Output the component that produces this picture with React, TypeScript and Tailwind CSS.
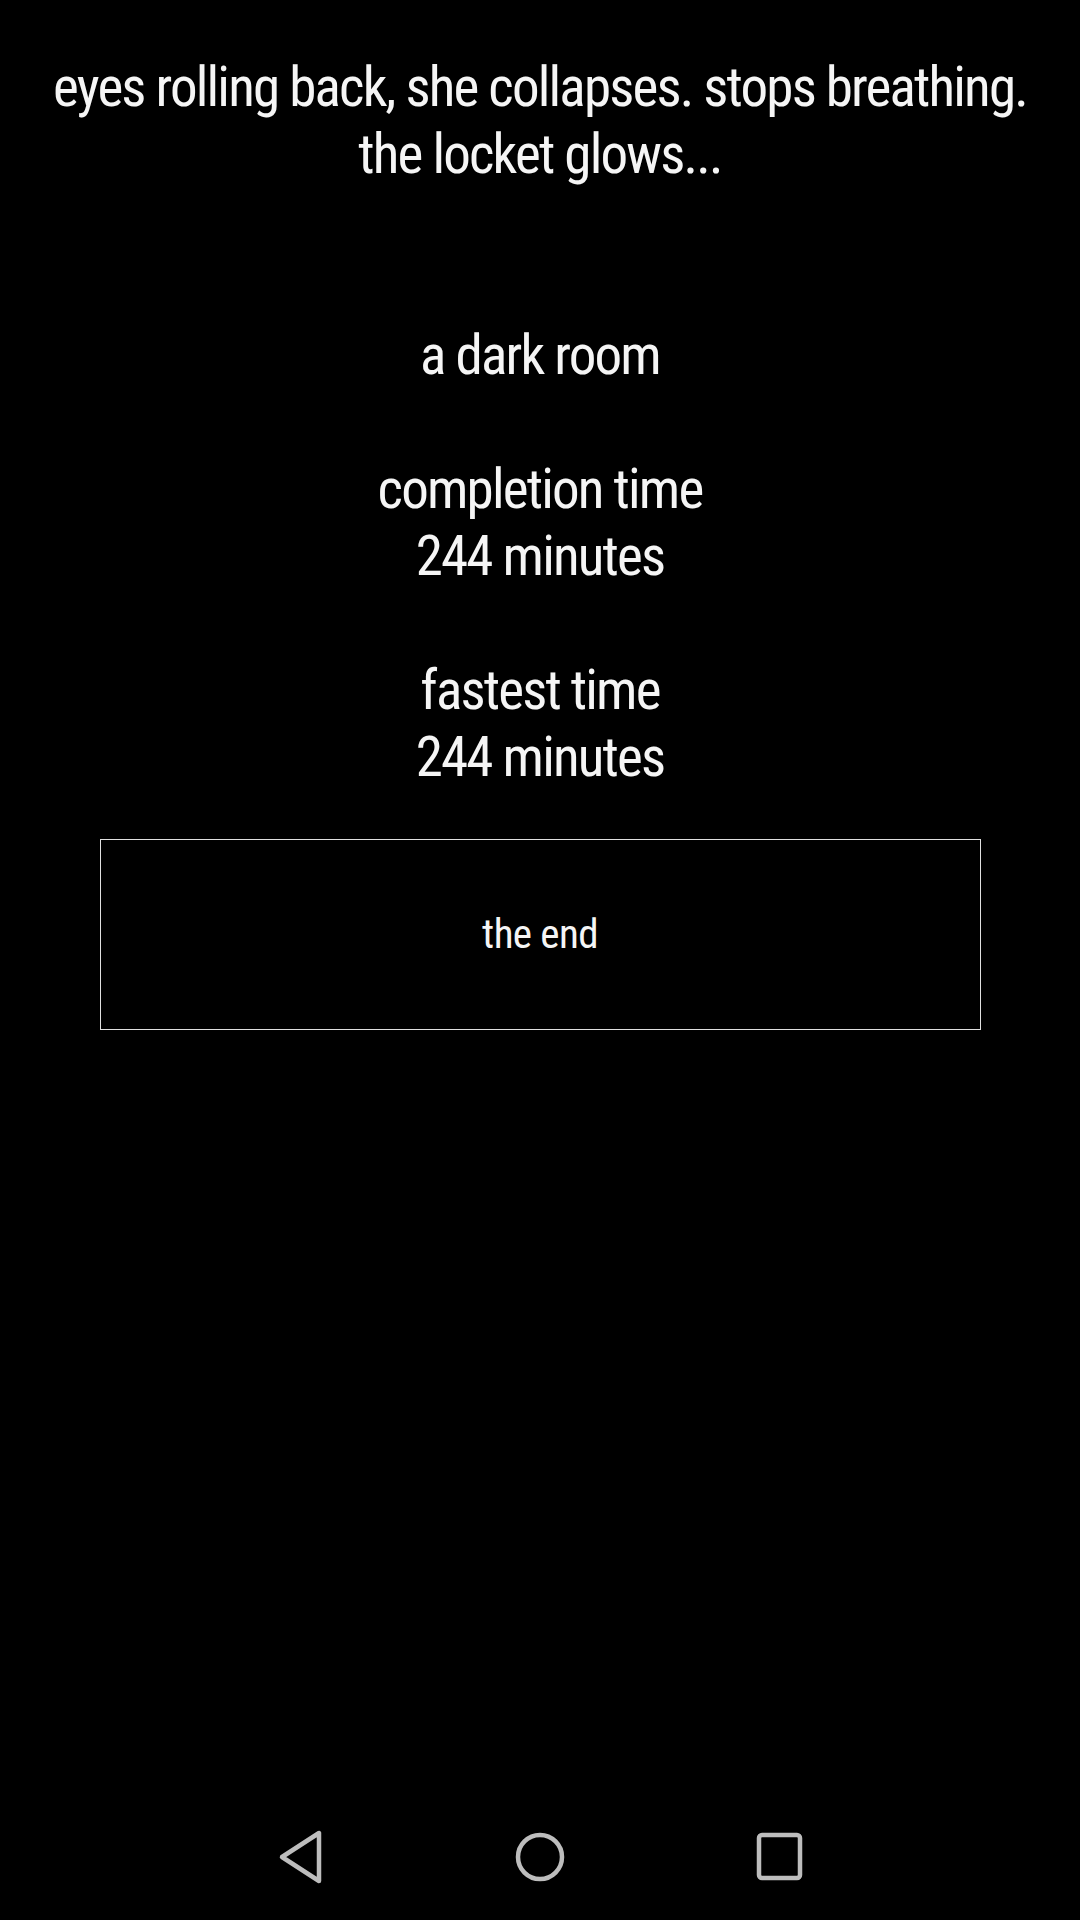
import React from "react";

const font = { fontFamily: '"Roboto Condensed", Roboto, "Liberation Sans", sans-serif' };

export default function App() {
  return (
    <div className="w-[1080px] h-[1920px] bg-black flex flex-col text-white" style={font}>
      <div className="flex-1 flex flex-col items-center pt-[54px]">
        <p className="text-center text-[55px] leading-[67px] tracking-[-1.8px] font-stretch-condensed text-[#f5f5f5] whitespace-nowrap">
          eyes rolling back, she collapses. stops breathing.
          <br />
          the locket glows...
          <br />
          <br />
          <br />
          a dark room
          <br />
          <br />
          completion time
          <br />
          244 minutes
          <br />
          <br />
          fastest time
          <br />
          244 minutes
        </p>
        <div className="mt-[48px] w-[881px] h-[191px] border border-[#e0e0e0] flex items-center justify-center">
          <span className="text-[41px] tracking-[-0.6px] font-stretch-condensed text-[#f5f5f5]">the end</span>
        </div>
      </div>
      <div className="h-[126px] flex items-center justify-center gap-[180px]">
        <svg width="60" height="60" viewBox="0 0 60 60">
          <path d="M49 6 L49 54 L12 30 Z" fill="none" stroke="#bdbdbd" strokeWidth="4.5" strokeLinejoin="round" />
        </svg>
        <svg width="60" height="60" viewBox="0 0 60 60">
          <circle cx="30" cy="30" r="22" fill="none" stroke="#bdbdbd" strokeWidth="4.5" />
        </svg>
        <svg width="60" height="60" viewBox="0 0 60 60">
          <rect x="9" y="8" width="41" height="43" rx="3" fill="none" stroke="#bdbdbd" strokeWidth="4.5" />
        </svg>
      </div>
    </div>
  );
}
